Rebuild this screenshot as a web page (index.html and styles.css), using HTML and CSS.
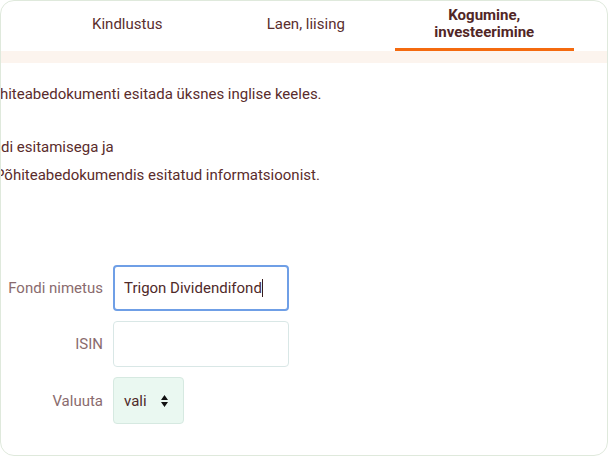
FILE: index.html
```html
<!DOCTYPE html>
<html lang="et">
<head>
<meta charset="utf-8">
<title>Kogumine, investeerimine</title>
<link rel="stylesheet" href="styles.css">
</head>
<body>
<div class="card">
  <nav class="tabs">
    <div class="tab">Kindlustus</div>
    <div class="tab">Laen, liising</div>
    <div class="tab active">Kogumine,<br>investeerimine</div>
  </nav>
  <div class="strip"></div>
  <div class="content">
    <p class="p1"><span class="l1">Põhiteabedokumenti esitada üksnes inglise keeles.</span></p>
    <p class="p2"><span class="l2">Fondi esitamisega ja</span><br><span class="l3">Põhiteabedokumendis esitatud informatsioonist.</span></p>
    <form class="form">
      <label class="label">Fondi nimetus</label>
      <div class="field focused">Trigon Dividendifond<span class="caret"></span></div>
      <label class="label">ISIN</label>
      <div class="field"></div>
      <label class="label">Valuuta</label>
      <div class="select">vali
        <svg class="arrows" width="7" height="12" viewBox="0 0 7 12"><path d="M3.5 0 L7 5 L0 5 Z M0 7 L7 7 L3.5 12 Z" fill="#111"/></svg>
      </div>
    </form>
  </div>
</div>
</body>
</html>
```
FILE: styles.css
```css
* { box-sizing: border-box; }
html, body { margin: 0; padding: 0; background: #fff; }
body { font-family: Roboto, "Noto Sans", sans-serif; }

.card {
  width: 608px;
  height: 456px;
  border: 1px solid #dfe9dc;
  border-radius: 14px;
  overflow: hidden;
  background: #fff;
}

.tabs {
  display: flex;
  padding-left: 37px;
  height: 50px;
}
.tab {
  width: 178.5px;
  display: flex;
  align-items: center;
  justify-content: center;
  text-align: center;
  font-size: 15px;
  line-height: 17px;
  color: #5a2e2e;
  border-bottom: 3px solid transparent;
  padding-bottom: 1px;
}
.tab.active {
  font-weight: 700;
  border-bottom-color: #f46a0f;
  color: #512626;
  padding-bottom: 2px;
}

.strip {
  height: 12px;
  background: #fcf4ee;
}

.content {
  padding-top: 17px;
  font-size: 15px;
  color: #5a2c2c;
}
.content p {
  margin: 0;
  line-height: 28px;
  white-space: nowrap;
}
.p2 { margin-top: 25px !important; }
.l1 { margin-left: -19px; }
.l2 { margin-left: -25px; }
.l3 { margin-left: -6px; }

.form {
  margin-top: 76px;
  display: grid;
  grid-template-columns: 102px 176px;
  column-gap: 10px;
  row-gap: 10px;
  align-items: center;
}
.label {
  text-align: right;
  color: #8a6b6e;
  font-size: 15px;
}
.field {
  height: 46px;
  border: 1px solid #d9e7e6;
  border-radius: 4px;
  display: flex;
  align-items: center;
  padding-left: 10px;
  color: #4f2a2a;
  font-size: 15px;
}
.field.focused {
  border: 2px solid #6f9fe6;
  padding-left: 9px;
}
.caret {
  display: inline-block;
  width: 1px;
  height: 18px;
  background: #3a1d1d;
}
.select {
  width: 71px;
  height: 47px;
  border: 1px solid #d6e9e1;
  border-radius: 4px;
  background: #eaf8f1;
  display: flex;
  align-items: center;
  padding-left: 10px;
  color: #4f2a2a;
  font-size: 15px;
}
.arrows { margin-left: 14px; }
```
